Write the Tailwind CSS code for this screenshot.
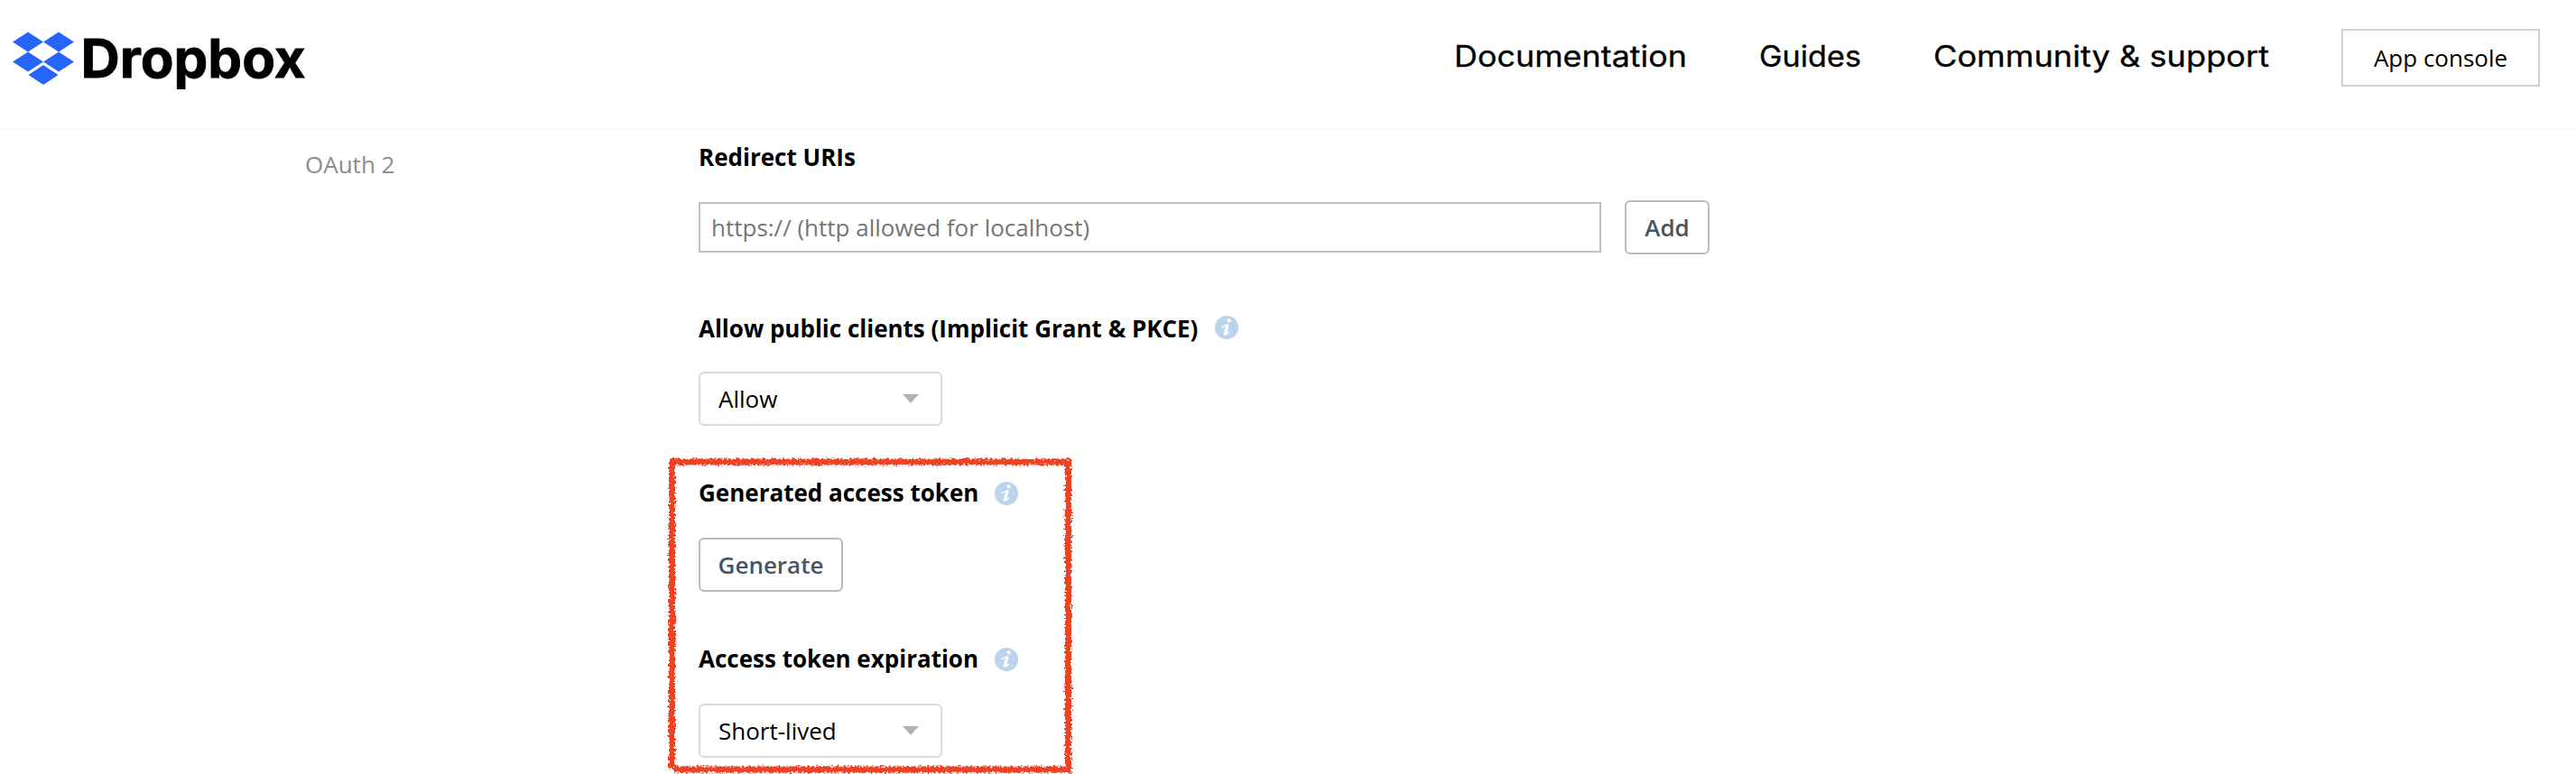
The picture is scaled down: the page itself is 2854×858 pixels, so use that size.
<!DOCTYPE html>
<html lang="en">
<head>
<meta charset="utf-8">
<title>Dropbox App console</title>
<script src="https://cdn.jsdelivr.net/npm/@tailwindcss/browser@4"></script>
</head>
<body class="relative h-[858px] w-[2854px] overflow-hidden bg-white font-['Open_Sans',sans-serif] text-[26px] leading-9 text-black">
<svg class="hidden">
  <symbol id="info" viewBox="0 0 26 26">
    <circle cx="13" cy="13" r="13" fill="#bad4ee"/>
    <circle cx="15.6" cy="5.4" r="2.1" fill="#fff"/>
    <path d="M7.6 13.2C9.4 11.4 11.6 10.2 14.6 10L11.6 20.6C13.2 20.4 14.6 19.4 16.2 17.8" fill="none" stroke="#fff" stroke-width="1.6"/>
    <path d="M14 10L11 21.4" fill="none" stroke="#fff" stroke-width="3.2"/>
  </symbol>
</svg>
<header class="flex h-36 items-start justify-between border-b-2 border-[#f7f7f7] pr-10 pl-3.5">
  <a class="flex pt-8">
    <svg class="overflow-visible" width="340" height="80" viewBox="14 32 340 80">
      <path fill="#2565fb" d="M31 35.5L48 46.5L31 57.5L14 46.5ZM65 35.5L82 46.5L65 57.5L48 46.5ZM31 57.5L48 68.5L31 79.5L14 68.5ZM65 57.5L82 68.5L65 79.5L48 68.5ZM48 72L64.5 83L48 94L31.5 83Z"/>
      <text x="89.5" y="86" font-family="Inter" font-weight="700" font-size="59" textLength="249" lengthAdjust="spacingAndGlyphs" stroke="#000" stroke-width=".8">Dropbox</text>
    </svg>
  </a>
  <nav class="flex items-start pt-8">
    <svg class="mr-[80px] overflow-visible" width="258" height="60"><text x="0" y="42" font-family="Inter" font-size="32" textLength="258" lengthAdjust="spacingAndGlyphs" stroke="#000" stroke-width=".3">Documentation</text></svg>
    <svg class="mr-[80px] overflow-visible" width="113" height="60"><text x="0" y="42" font-family="Inter" font-size="32" textLength="113" lengthAdjust="spacingAndGlyphs" stroke="#000" stroke-width=".3">Guides</text></svg>
    <svg class="mr-[80px] overflow-visible" width="372" height="60"><text x="0" y="42" font-family="Inter" font-size="32" textLength="372" lengthAdjust="spacingAndGlyphs" stroke="#000" stroke-width=".3">Community &amp; support</text></svg>
    <a class="flex h-16 w-[220px] items-center justify-center border-2 border-[#d0d0d0]">App console</a>
  </nav>
</header>
<main class="flex">
  <aside class="w-[774px] shrink-0 pt-5 pl-[338px] text-[#8c8c8c]">OAuth 2</aside>
  <section class="pt-3">
    <h3 class="font-bold">Redirect URIs</h3>
    <div class="mt-[30px] flex items-center gap-[26px]">
      <div class="flex h-14 w-[1000px] items-center border-2 border-[#c1c1c1] pl-3 text-[#757575]">https:// (http allowed for localhost)</div>
      <button class="h-[60px] w-[94px] rounded-md border-2 border-[#bbb] font-semibold text-[#4a5462]">Add</button>
    </div>
    <h3 class="mt-16 flex font-bold">Allow public clients (Implicit Grant &amp; PKCE)<svg class="mt-1 ml-[19px]" width="26" height="26"><use href="#info"/></svg></h3>
    <div class="mt-[30px] flex h-[60px] w-[270px] items-center justify-between rounded-md border-2 border-[#d9d9d9] pr-6 pl-5">Allow<svg width="18" height="10"><path d="M0 0H18L9 10Z" fill="#adb3b8"/></svg></div>
    <h3 class="mt-14 flex font-bold">Generated access token<svg class="mt-1.5 ml-[18px]" width="26" height="26"><use href="#info"/></svg></h3>
    <button class="mt-8 block h-[60px] w-[160px] rounded-md border-2 border-[#bbb] font-semibold text-[#4a5462]">Generate</button>
    <h3 class="mt-14 flex font-bold">Access token expiration<svg class="mt-1.5 ml-[18px]" width="26" height="26"><use href="#info"/></svg></h3>
    <div class="mt-8 flex h-[60px] w-[270px] items-center justify-between rounded-md border-2 border-[#d9d9d9] pr-6 pl-5">Short-lived<svg width="18" height="10"><path d="M0 0H18L9 10Z" fill="#adb3b8"/></svg></div>
  </section>
</main>
<svg class="pointer-events-none absolute top-[500px] left-[734px]" width="462" height="358" viewBox="734 500 462 358">
  <defs>
    <filter id="rough" filterUnits="userSpaceOnUse" x="734" y="500" width="462" height="358" color-interpolation-filters="sRGB">
      <feTurbulence type="fractalNoise" baseFrequency="0.4" numOctaves="2" seed="4" result="n"/>
      <feDisplacementMap in="SourceGraphic" in2="n" scale="7" xChannelSelector="R" yChannelSelector="G"/>
    </filter>
  </defs>
  <path d="M741 512H1187M744.5 508V852M1183.5 509V857M747 853H1187" fill="none" stroke="#ee4225" stroke-width="7" filter="url(#rough)"/>
</svg>
</body>
</html>
